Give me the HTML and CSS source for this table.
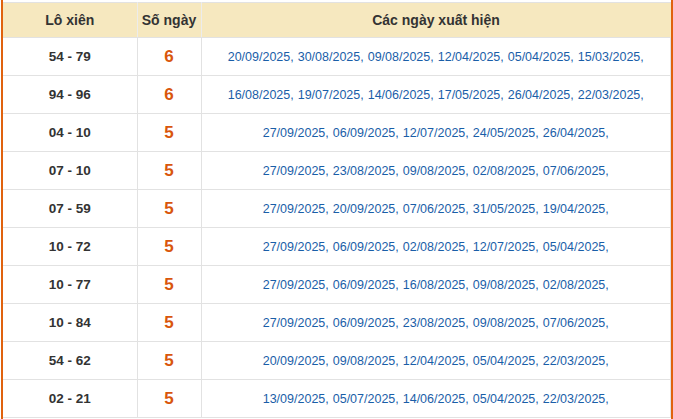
FILE: index.html
```html
<!DOCTYPE html>
<html lang="vi">
<head>
<meta charset="utf-8">
<link rel="stylesheet" href="styles.css">
</head>
<body>
<div class="frame">
<table class="stats">
<colgroup><col class="c1"><col class="c2"><col class="c3"></colgroup>
<thead>
<tr><th>Lô xiên</th><th>Số ngày</th><th>Các ngày xuất hiện</th></tr>
</thead>
<tbody>
<tr><td class="pair">54 - 79</td><td class="count">6</td><td class="dates">20/09/2025, 30/08/2025, 09/08/2025, 12/04/2025, 05/04/2025, 15/03/2025,</td></tr>
<tr><td class="pair">94 - 96</td><td class="count">6</td><td class="dates">16/08/2025, 19/07/2025, 14/06/2025, 17/05/2025, 26/04/2025, 22/03/2025,</td></tr>
<tr><td class="pair">04 - 10</td><td class="count">5</td><td class="dates">27/09/2025, 06/09/2025, 12/07/2025, 24/05/2025, 26/04/2025,</td></tr>
<tr><td class="pair">07 - 10</td><td class="count">5</td><td class="dates">27/09/2025, 23/08/2025, 09/08/2025, 02/08/2025, 07/06/2025,</td></tr>
<tr><td class="pair">07 - 59</td><td class="count">5</td><td class="dates">27/09/2025, 20/09/2025, 07/06/2025, 31/05/2025, 19/04/2025,</td></tr>
<tr><td class="pair">10 - 72</td><td class="count">5</td><td class="dates">27/09/2025, 06/09/2025, 02/08/2025, 12/07/2025, 05/04/2025,</td></tr>
<tr><td class="pair">10 - 77</td><td class="count">5</td><td class="dates">27/09/2025, 06/09/2025, 16/08/2025, 09/08/2025, 02/08/2025,</td></tr>
<tr><td class="pair">10 - 84</td><td class="count">5</td><td class="dates">27/09/2025, 06/09/2025, 23/08/2025, 09/08/2025, 07/06/2025,</td></tr>
<tr><td class="pair">54 - 62</td><td class="count">5</td><td class="dates">20/09/2025, 09/08/2025, 12/04/2025, 05/04/2025, 22/03/2025,</td></tr>
<tr><td class="pair">02 - 21</td><td class="count">5</td><td class="dates">13/09/2025, 05/07/2025, 14/06/2025, 05/04/2025, 22/03/2025,</td></tr>
</tbody>
</table>
</div>
</body>
</html>
```
FILE: styles.css
```css
html, body {
  margin: 0;
  padding: 0;
  background: #ffffff;
}
body {
  font-family: "Liberation Sans", Arial, sans-serif;
  overflow: hidden;
  height: 419px;
}
.frame {
  margin-left: 1px;
  width: 668px;
  height: 417px;
  border-left: 2px solid #e0620e;
  border-right: 2px solid #e0620e;
  padding-top: 2px;
  overflow: hidden;
}
.stats {
  width: 668px;
  border-collapse: collapse;
  table-layout: fixed;
}
.c1 { width: 134px; }
.c2 { width: 64px; }
.stats th {
  background: #f6e8bf;
  color: #333333;
  font-size: 14px;
  font-weight: bold;
  height: 34px;
  padding: 0;
  border-top: 1px solid #e2e2e2;
  border-bottom: 1px solid #e2e2e2;
  border-right: 1px solid #ececec;
  text-align: center;
  vertical-align: middle;
}
.stats th:last-child { border-right: none; }
.stats td {
  height: 37px;
  padding: 0;
  border-bottom: 1px solid #e2e2e2;
  border-right: 1px solid #e2e2e2;
  text-align: center;
  vertical-align: middle;
}
.pair {
  font-size: 13.5px;
  font-weight: bold;
  color: #333333;
}
.count {
  font-size: 17px;
  font-weight: bold;
  color: #d9560c;
}
.dates {
  font-size: 12.5px;
  color: #1a5ea8;
  word-spacing: 0.5px;
}
```
